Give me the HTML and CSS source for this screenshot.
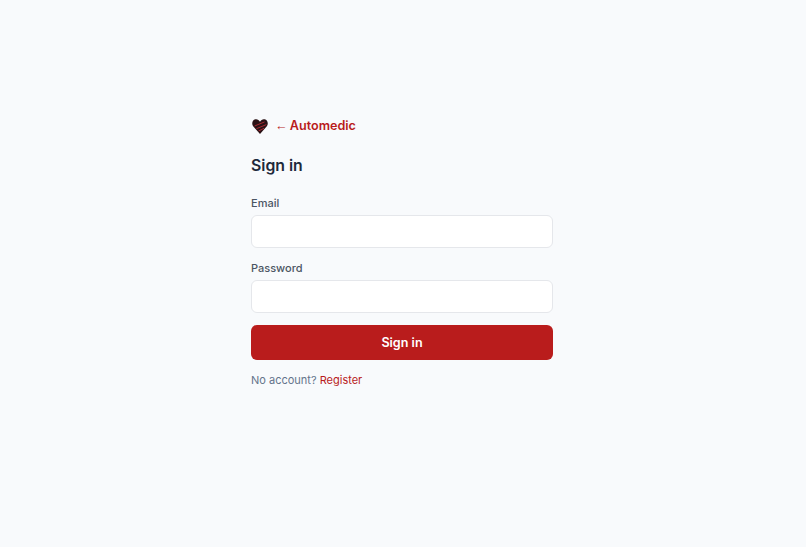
FILE: index.html
```html
<!DOCTYPE html>
<html>
<head>
    <title>Sign in</title>
    <link rel="stylesheet" href="styles.css">
</head>
<body>
    <main class="auth">
        <a class="brand" href="#">
            <svg class="brand-logo" width="18" height="18" viewBox="0 0 20 20" aria-hidden="true">
                <path d="M10 19 L2.4 10.4 C0.4 7.6 1.4 3.2 4.8 2.6 C7 2.2 8.8 3.2 10 5.2 C11.2 3.2 13 2.2 15.2 2.6 C18.6 3.2 19.6 7.6 17.6 10.4 Z" fill="#2a1216"/>
                <path d="M4 10 L15 5.5 M6 13 L17 8.5 M8.5 15.5 L14.5 12.5" stroke="#a82a32" stroke-width="1.1" fill="none"/>
            </svg>
            <span class="brand-name"><span class="brand-arrow">←</span> Automedic</span>
        </a>
        <h1 class="title">Sign in</h1>
        <form class="form">
            <label class="field">
                <span class="field-label">Email</span>
                <input class="field-input" type="email">
            </label>
            <label class="field">
                <span class="field-label">Password</span>
                <input class="field-input" type="password">
            </label>
            <button class="submit" type="button">Sign in</button>
        </form>
        <p class="switch">No account? <a href="#">Register</a></p>
    </main>
</body>
</html>
```
FILE: styles.css
```css
* {
    box-sizing: border-box;
}
body {
    margin: 0;
    padding-right: 2px;
    min-height: 547px;
    background-color: #f8fafc;
    color: #1e293b;
    font-family: Inter, "Liberation Sans", sans-serif;
}
.auth {
    width: 302px;
    margin: 0 auto;
    padding-top: 116px;
}
.brand {
    display: flex;
    align-items: center;
    gap: 6px;
    height: 20px;
    color: #b91c1c;
    font-size: 12.6px;
    font-weight: 600;
    text-decoration: none;
}
.brand-name {
    padding-bottom: 2px;
    word-spacing: -1px;
}
.brand-arrow {
    font-family: "Liberation Sans", sans-serif;
    font-weight: 400;
}
.title {
    margin: 19px 0 0;
    font-size: 15.8px;
    line-height: 22px;
    font-weight: 600;
}
.form {
    display: flex;
    flex-direction: column;
    gap: 12px;
    margin-top: 18px;
}
.field {
    display: flex;
    flex-direction: column;
    gap: 4px;
}
.field-label {
    color: #4b5563;
    font-size: 11px;
    line-height: 16px;
    font-weight: 500;
}
.field-input {
    width: 100%;
    height: 33px;
    background-color: #fff;
    border: 1px solid #e5e7eb;
    border-radius: 6px;
}
.submit {
    height: 35px;
    background-color: #b91c1c;
    color: #fff;
    border: none;
    border-radius: 6px;
    font-family: inherit;
    font-size: 12.6px;
    font-weight: 600;
}
.switch {
    margin: 12px 0 0;
    color: #64748b;
    font-size: 11px;
    line-height: 16px;
}
.switch a {
    color: #b91c1c;
    text-decoration: none;
}
```
